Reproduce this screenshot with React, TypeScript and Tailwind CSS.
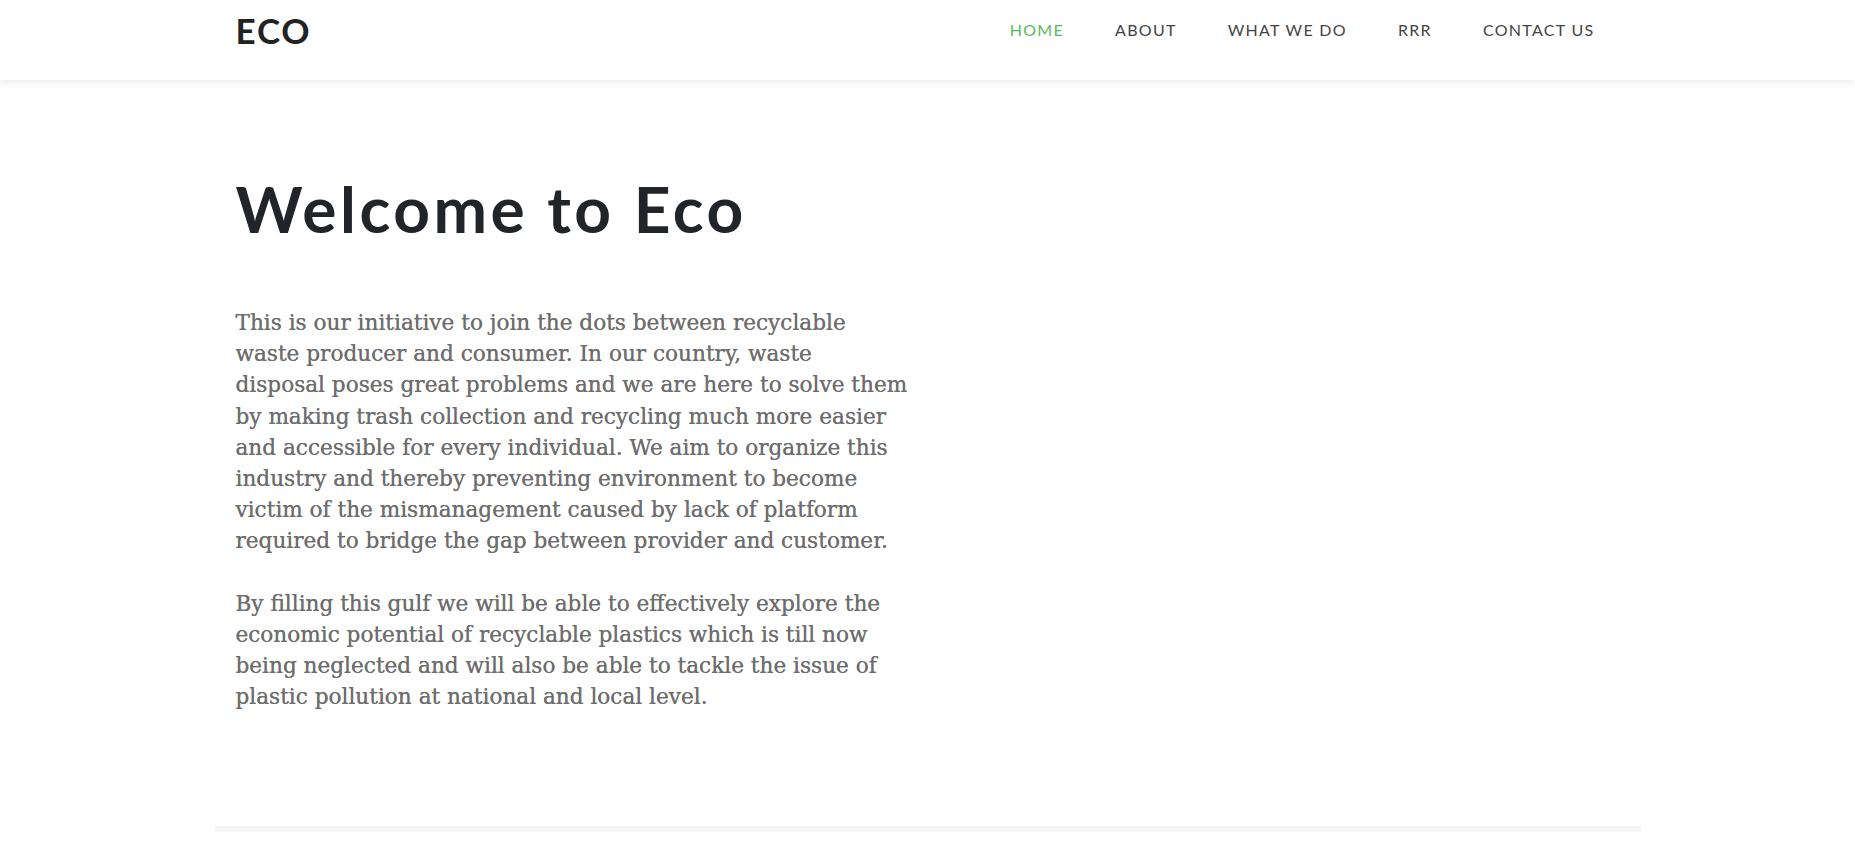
const links = ['HOME', 'ABOUT', 'WHAT WE DO', 'RRR', 'CONTACT US']

const intro = [
  'This is our initiative to join the dots between recyclable',
  'waste producer and consumer. In our country, waste',
  'disposal poses great problems and we are here to solve them',
  'by making trash collection and recycling much more easier',
  'and accessible for every individual. We aim to organize this',
  'industry and thereby preventing environment to become',
  'victim of the mismanagement caused by lack of platform',
  'required to bridge the gap between provider and customer.',
]

const outro = [
  'By filling this gulf we will be able to effectively explore the',
  'economic potential of recyclable plastics which is till now',
  'being neglected and will also be able to tackle the issue of',
  'plastic pollution at national and local level.',
]

export default function App() {
  return (
    <div className="min-h-[842px] bg-white overflow-hidden">
      <header className="h-[80px] bg-white shadow-[0_2px_8px_rgba(0,0,0,0.09)] relative z-10">
        <div className="max-w-[1426px] mx-auto pl-[21px] pr-[45px] pt-[13px] flex items-start justify-between">
          <a className="text-[35px] leading-none font-bold tracking-[1.8px] text-[#222] font-['Lato',sans-serif]">ECO</a>
          <nav className="flex gap-[51px] pt-[7px] mr-[1px]">
            {links.map((l, i) => (
              <a
                key={l}
                className={`text-[16px] leading-[20px] tracking-[1.3px] font-['Lato',sans-serif] ${i === 0 ? 'text-[#5cb85c]' : 'text-[#444]'}`}
              >
                {l}
              </a>
            ))}
          </nav>
        </div>
      </header>

      <main className="max-w-[1426px] mx-auto">
        <section className="pl-[21px] pt-[91px] pb-[114px]">
          <h1 className="text-[64px] leading-[76px] font-bold tracking-[3.5px] text-[#212529] font-['Lato',sans-serif]">Welcome to Eco</h1>
          <div className="mt-[60px] w-[700px] text-[21.6px] leading-[31.2px] text-[#6e6e6e] font-['DejaVu_Serif',serif] [text-shadow:0_0_0.4px_#6e6e6e] whitespace-nowrap">
            <p>
              {intro.map((line) => (
                <span key={line} className="block">{line}</span>
              ))}
            </p>
            <p className="mt-[31px]">
              {outro.map((line) => (
                <span key={line} className="block">{line}</span>
              ))}
            </p>
          </div>
        </section>
        <div className="h-[6px] bg-[#f5f5f5]" />
      </main>
    </div>
  )
}
